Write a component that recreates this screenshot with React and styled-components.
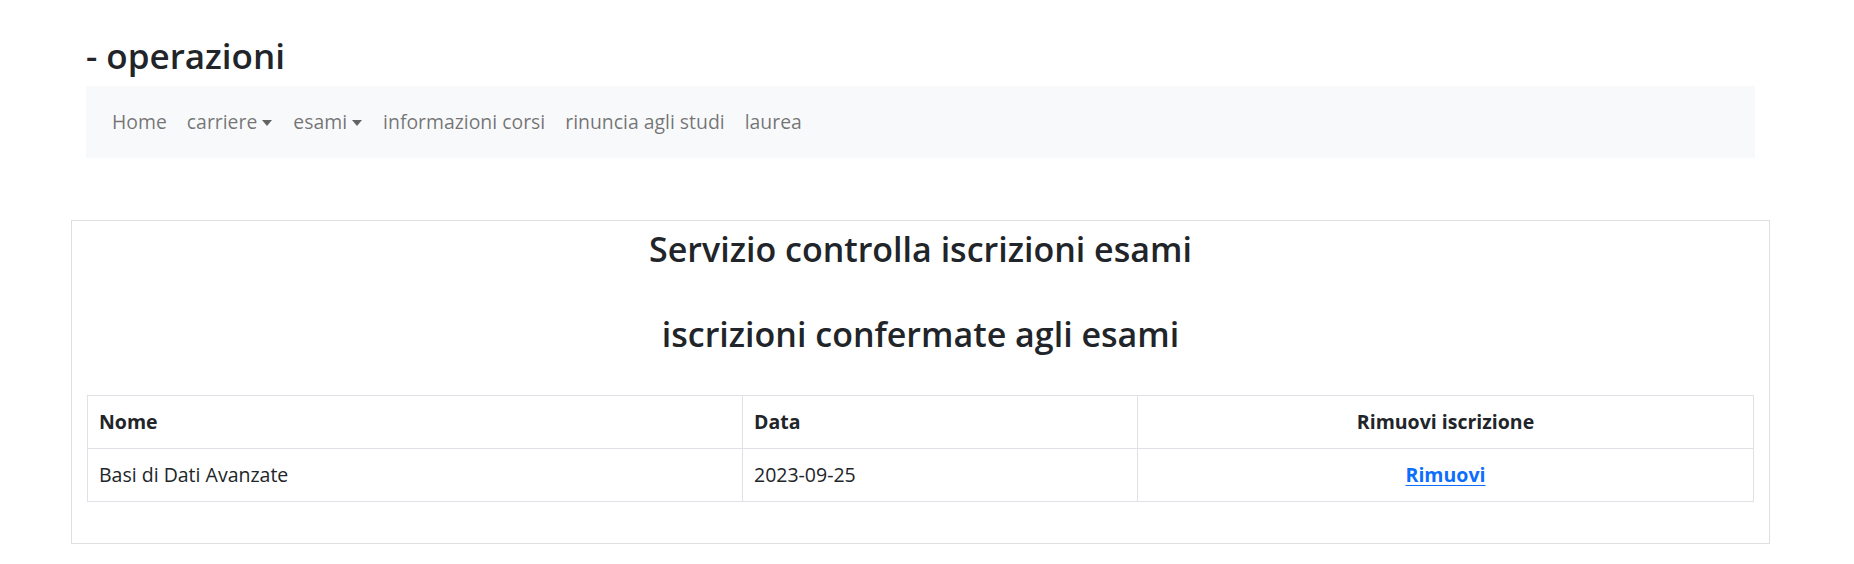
import React from "react";
import styled, { createGlobalStyle } from "styled-components";

const GlobalStyle = createGlobalStyle`
    body {
        margin: 0;
        background: #ffffff;
        color: #212529;
        font-family: "Open Sans", "Noto Sans", sans-serif;
    }
`

const navItems = [
    { label: "Home" },
    { label: "carriere", dropdown: true },
    { label: "esami", dropdown: true },
    { label: "informazioni corsi" },
    { label: "rinuncia agli studi" },
    { label: "laurea" },
]

const iscrizioni = [
    { nome: "Basi di Dati Avanzate", data: "2023-09-25" },
]

const App = () => {
    return(
        <>
            <GlobalStyle />
            <Page>
                <TopContainer>
                    <PageTitle>- operazioni</PageTitle>
                    <NavBar>
                        {navItems.map(item => (
                            <NavLink key={item.label} href="#">
                                {item.label}
                                {item.dropdown && <Caret />}
                            </NavLink>
                        ))}
                    </NavBar>
                </TopContainer>

                <Card>
                    <CardTitle>Servizio controlla iscrizioni esami</CardTitle>
                    <CardSubtitle>iscrizioni confermate agli esami</CardSubtitle>

                    <Table>
                        <colgroup>
                            <col style={{width: 655}} />
                            <col style={{width: 395}} />
                            <col />
                        </colgroup>
                        <thead>
                            <tr>
                                <Th>Nome</Th>
                                <Th>Data</Th>
                                <Th center>Rimuovi iscrizione</Th>
                            </tr>
                        </thead>
                        <tbody>
                            {iscrizioni.map(row => (
                                <tr key={row.nome}>
                                    <Td>{row.nome}</Td>
                                    <Td>{row.data}</Td>
                                    <Td center><RemoveLink href="#">Rimuovi</RemoveLink></Td>
                                </tr>
                            ))}
                        </tbody>
                    </Table>
                </Card>
            </Page>
        </>
    )
}

const Page = styled.div`
    padding-top: 35px;
    padding-bottom: 22px;
`

const TopContainer = styled.div`
    margin-left: 86px;
    width: 1669px;
`

const PageTitle = styled.h3`
    margin: 0 0 9px 0;
    font-size: 35px;
    line-height: 42px;
    font-weight: 600;
    color: #212529;
`

const NavBar = styled.nav`
    display: flex;
    align-items: center;
    height: 72px;
    padding: 0 16px;
    background-color: #f8f9fa;
`

const NavLink = styled.a`
    display: flex;
    align-items: center;
    padding: 0 10px;
    font-size: 19.4px;
    line-height: 30px;
    color: rgba(0, 0, 0, 0.55);
    text-decoration: none;
`

const Caret = styled.span`
    display: inline-block;
    margin-left: 5px;
    margin-right: 1px;
    margin-top: 2px;
    width: 0;
    height: 0;
    border-top: 6px solid rgba(0, 0, 0, 0.6);
    border-left: 5.5px solid transparent;
    border-right: 5.5px solid transparent;
`

const Card = styled.div`
    margin: 62px 0 0 71px;
    width: 1699px;
    box-sizing: border-box;
    padding: 7px 15px 41px 15px;
    border: 1px solid rgba(0, 0, 0, 0.125);
`

const CardTitle = styled.h2`
    margin: 0;
    text-align: center;
    font-size: 34px;
    line-height: 42px;
    font-weight: 600;
`

const CardSubtitle = styled(CardTitle)`
    margin: 43px 0 40px 0;
`

const Table = styled.table`
    width: 100%;
    table-layout: fixed;
    border-collapse: collapse;
    font-size: 19.5px;
    line-height: 30px;
`

const Th = styled.th`
    padding: 11px;
    border: 1px solid #dee2e6;
    font-weight: 700;
    text-align: ${props => props.center ? 'center' : 'left'};
`

const Td = styled.td`
    padding: 11px;
    border: 1px solid #dee2e6;
    text-align: ${props => props.center ? 'center' : 'left'};
`

const RemoveLink = styled.a`
    color: #0d6efd;
    font-weight: 700;
    text-decoration: underline;
    text-underline-offset: 3px;
`

export default App
